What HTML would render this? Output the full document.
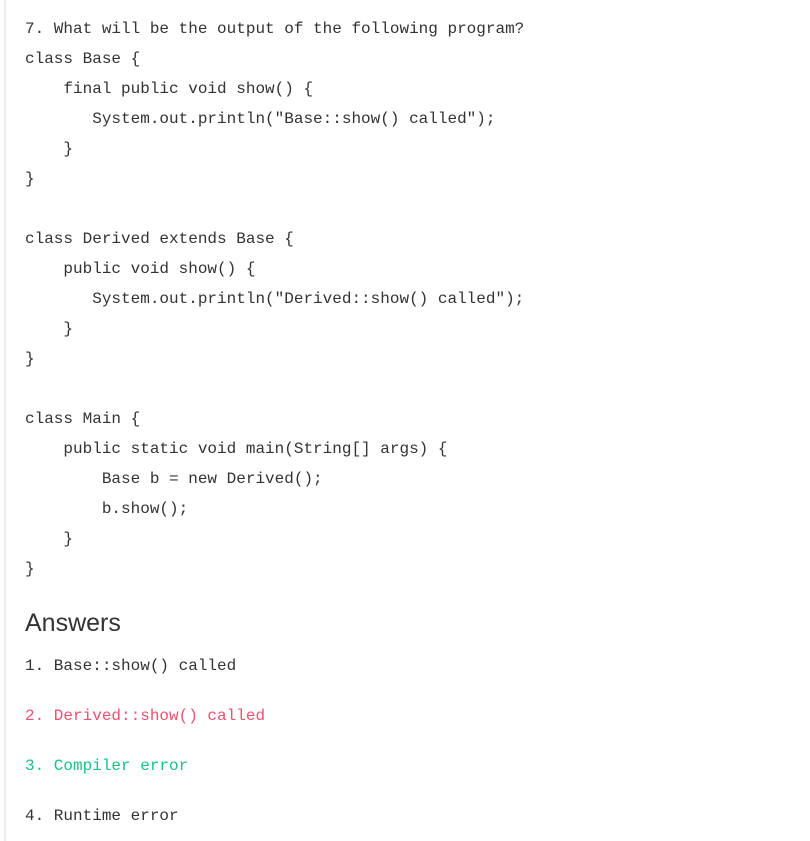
<!DOCTYPE html>
<html><head><meta charset="utf-8"><style>
html,body{margin:0;padding:0;background:#fff;width:810px;height:841px;overflow:hidden}
.bar{position:absolute;left:4px;top:0;width:2px;height:841px;background:#ececec}
.l{position:absolute;left:25px;font-family:"Liberation Mono",monospace;font-size:16px;line-height:20px;color:#333;white-space:pre}
h2{position:absolute;left:25px;top:608px;margin:0;font-family:"Liberation Sans",sans-serif;font-weight:normal;font-size:25px;line-height:30px;color:#333}
.r{color:#f0506e}.g{color:#17c284}
</style></head><body>
<div class="bar"></div>
<div class="l" style="top:19px">7. What will be the output of the following program?</div>
<div class="l" style="top:49px">class Base {</div>
<div class="l" style="top:79px">    final public void show() {</div>
<div class="l" style="top:109px">       System.out.println("Base::show() called");</div>
<div class="l" style="top:139px">    }</div>
<div class="l" style="top:169px">}</div>
<div class="l" style="top:229px">class Derived extends Base {</div>
<div class="l" style="top:259px">    public void show() {</div>
<div class="l" style="top:289px">       System.out.println("Derived::show() called");</div>
<div class="l" style="top:319px">    }</div>
<div class="l" style="top:349px">}</div>
<div class="l" style="top:409px">class Main {</div>
<div class="l" style="top:439px">    public static void main(String[] args) {</div>
<div class="l" style="top:469px">        Base b = new Derived();</div>
<div class="l" style="top:499px">        b.show();</div>
<div class="l" style="top:529px">    }</div>
<div class="l" style="top:559px">}</div>
<h2>Answers</h2>
<div class="l" style="top:656px">1. Base::show() called</div>
<div class="l r" style="top:706px">2. Derived::show() called</div>
<div class="l g" style="top:756px">3. Compiler error</div>
<div class="l" style="top:806px">4. Runtime error</div>
</body></html>
